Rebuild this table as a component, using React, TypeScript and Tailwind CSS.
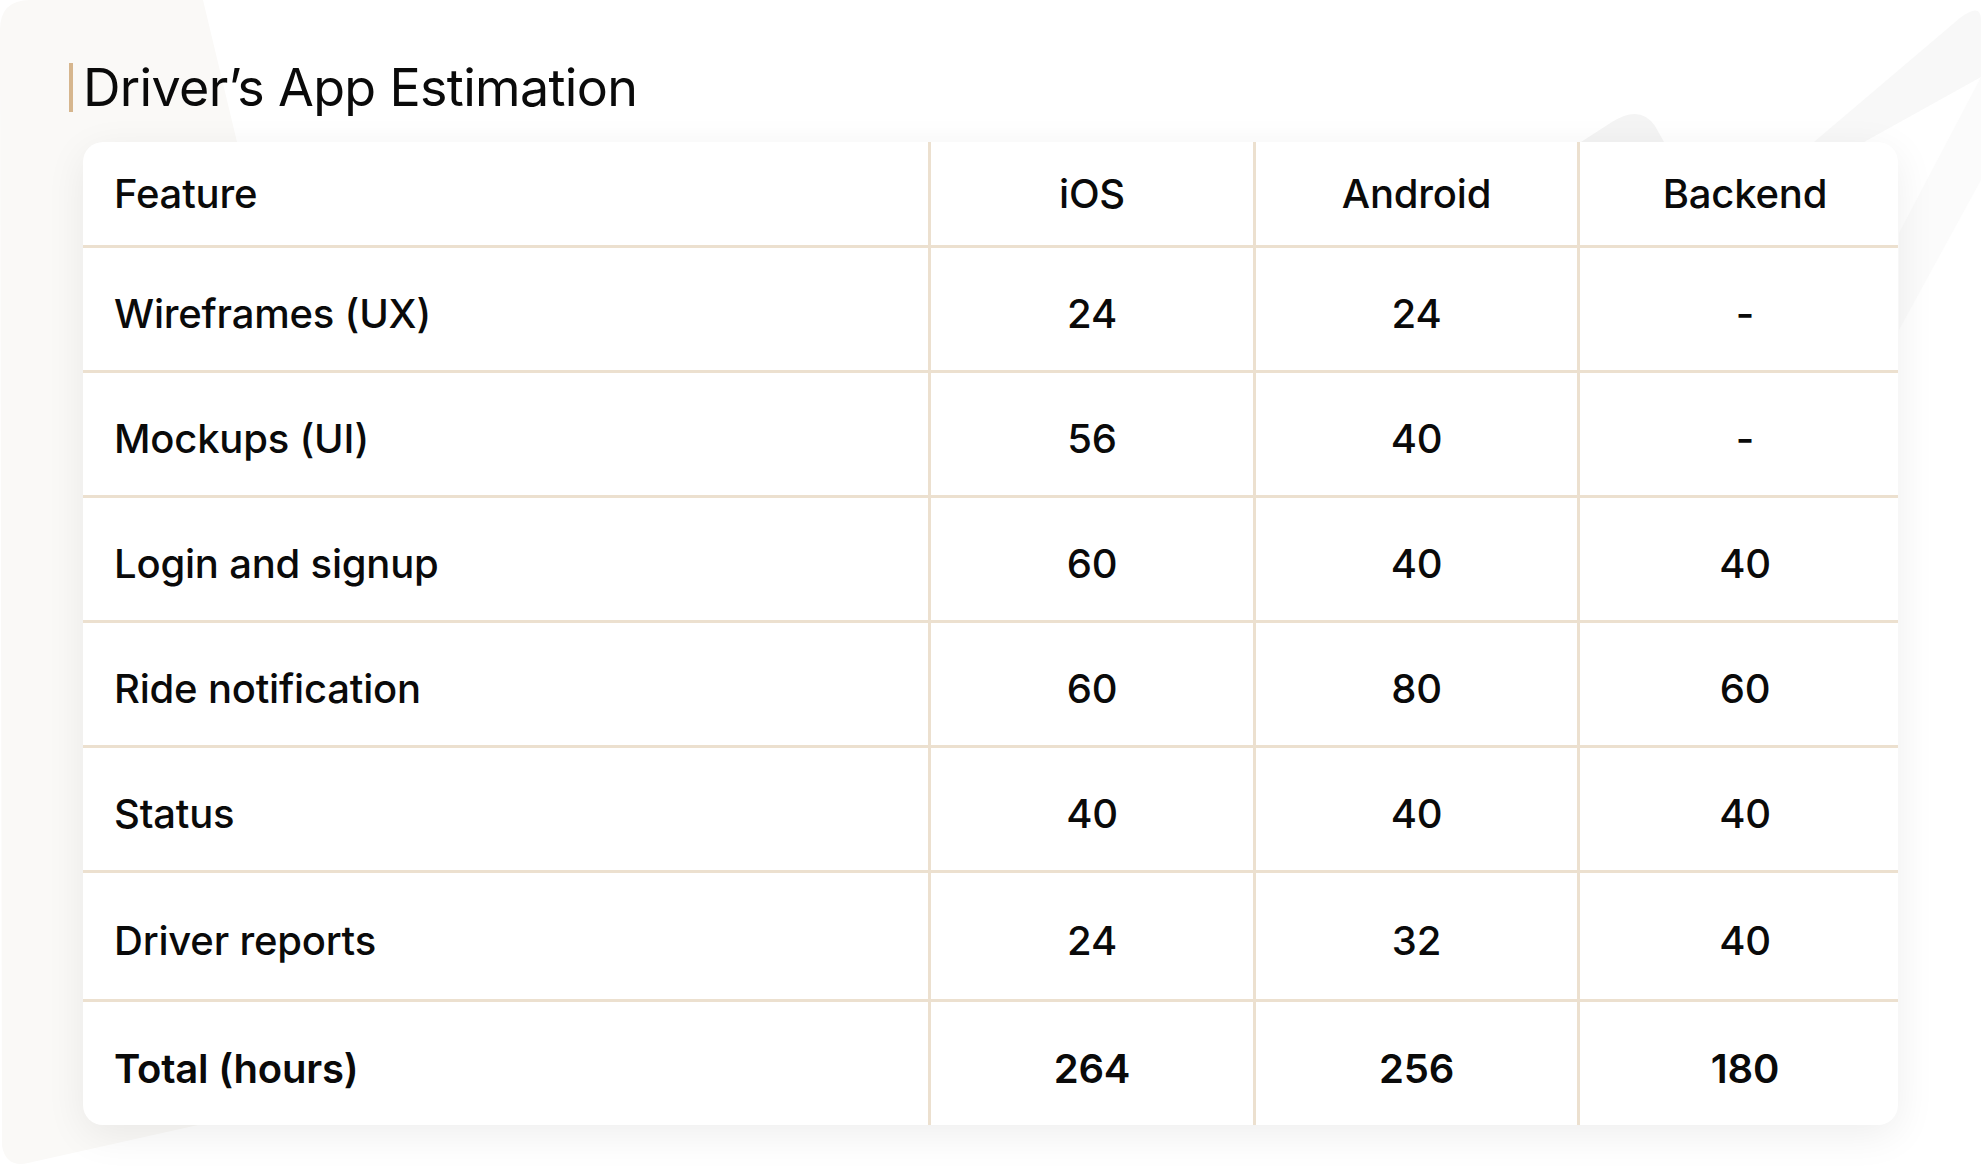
import React from "react";

type Row = {
  feature: string;
  ios: string;
  android: string;
  backend: string;
  total?: boolean;
};

const rows: Row[] = [
  { feature: "Wireframes (UX)", ios: "24", android: "24", backend: "-" },
  { feature: "Mockups (UI)", ios: "56", android: "40", backend: "-" },
  { feature: "Login and signup", ios: "60", android: "40", backend: "40" },
  { feature: "Ride notification", ios: "60", android: "80", backend: "60" },
  { feature: "Status", ios: "40", android: "40", backend: "40" },
  { feature: "Driver reports", ios: "24", android: "32", backend: "40" },
  { feature: "Total (hours)", ios: "264", android: "256", backend: "180", total: true },
];

// faint decorative shapes behind the card
function Backdrop() {
  return (
    <svg
      className="pointer-events-none absolute inset-0"
      width="1981"
      height="1171"
      viewBox="0 0 1981 1171"
      aria-hidden
    >
      <path
        d="M0 30 Q0 0 30 0 L203 0 L237 142 L420 1000 L207 1123 L28 1163 Q6 1168 2 1146 Z"
        fill="#faf9f7"
      />
      <path d="M1814 142 L1960 18 Q1981 2 1981 20 L1981 77 L1864 142 Z" fill="#f8f8f8" />
      <path d="M1899 233 L1981 77 L1981 180 L1899 330 Z" fill="#fbfbfb" />
      <path
        d="M1581 142 L1612 122 Q1640 104 1655 126 L1664 142 Z"
        fill="#f4f4f4"
      />
    </svg>
  );
}

function Cell({
  children,
  first,
  last,
  bottom,
  bold,
  head,
}: {
  children: React.ReactNode;
  first?: boolean;
  last?: boolean;
  bottom?: boolean;
  bold?: boolean;
  head?: boolean;
}) {
  return (
    <div
      className={[
        "flex items-center border-[#ece0cf]",
        first ? "justify-start pl-[31px]" : "justify-center",
        head ? "" : "pt-[10px]",
        last ? "pl-[12px]" : "border-r-[3px]",
        bottom ? "" : "border-b-[3px]",
        bold ? "font-semibold" : "font-medium",
      ].join(" ")}
    >
      {children}
    </div>
  );
}

export default function App() {
  return (
    <div className="relative h-[1171px] w-full overflow-hidden bg-white font-['Inter',sans-serif] text-[#0a0a0a]">
      <Backdrop />
      <div className="relative px-[83px] pt-[63px]">
        <h1 className="-ml-[14px] flex h-[49px] items-center gap-[10px] text-[52px] font-normal leading-none tracking-[-0.013em]">
          <span className="h-[49px] w-[4px] bg-[#d6b68e]" />
          <span>Driver’s App Estimation</span>
        </h1>

        <div className="mt-[30px] overflow-hidden rounded-[20px] bg-white shadow-[0_10px_40px_rgba(0,0,0,0.07)]">
          <div className="grid grid-cols-[848px_325px_324px_1fr] grid-rows-[106px_repeat(5,125px)_129px_123px] text-[40px] leading-none tracking-[-0.005em]">
            <Cell first head>Feature</Cell>
            <Cell head>iOS</Cell>
            <Cell head>Android</Cell>
            <Cell last head>Backend</Cell>
            {rows.map((r, i) => {
              const end = i === rows.length - 1;
              return (
                <React.Fragment key={r.feature}>
                  <Cell first bottom={end} bold={r.total}>
                    {r.feature}
                  </Cell>
                  <Cell bottom={end} bold={r.total}>
                    {r.ios}
                  </Cell>
                  <Cell bottom={end} bold={r.total}>
                    {r.android}
                  </Cell>
                  <Cell last bottom={end} bold={r.total}>
                    {r.backend}
                  </Cell>
                </React.Fragment>
              );
            })}
          </div>
        </div>
      </div>
    </div>
  );
}
